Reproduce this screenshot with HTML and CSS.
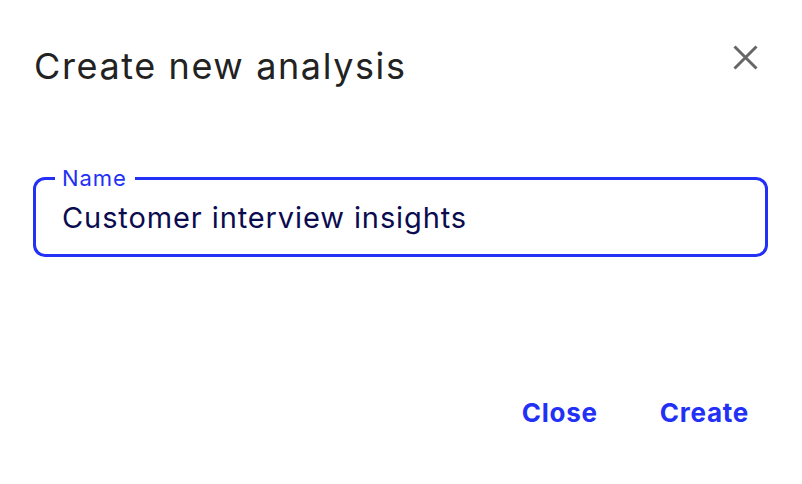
FILE: index.html
```html
<!DOCTYPE html>
<html>
<head>
<meta charset="utf-8">
<link rel="stylesheet" href="styles.css">
</head>
<body>
<div class="dialog">
  <div class="header">
    <h1 class="title">Create new analysis</h1>
    <button class="close-x" aria-label="Close">
      <svg width="25" height="25" viewBox="0 0 25 25"><path d="M1.5 1.5 L23.5 23.5 M23.5 1.5 L1.5 23.5" stroke="#666" stroke-width="3" fill="none"/></svg>
    </button>
  </div>
  <div class="field">
    <span class="label">Name</span>
    <div class="value">Customer interview insights</div>
  </div>
  <div class="actions">
    <button class="btn">Close</button>
    <button class="btn">Create</button>
  </div>
</div>
</body>
</html>
```
FILE: styles.css
```css
html, body { margin: 0; padding: 0; background: #fff; }
body { font-family: Inter, "Noto Sans", sans-serif; width: 802px; height: 484px; overflow: hidden; }
.dialog { padding: 44px 34px 0 33px; display: flex; flex-direction: column; }
.header { display: flex; justify-content: space-between; align-items: flex-start; height: 44px; padding-left: 1px; }
.title { margin: 0; font-size: 36px; font-weight: 400; color: #222; line-height: 44px; letter-spacing: 1.6px; }
.close-x { background: none; border: 0; padding: 0; margin: 1px 10px 0 0; width: 25px; height: 25px; display: block; cursor: pointer; }
.close-x svg { display: block; }
.field { position: relative; margin-top: 89px; height: 80px; box-sizing: border-box; border: 3px solid #2330f5; border-radius: 12px; padding: 20px 0 0 26px; }
.label { position: absolute; left: 19px; top: -13px; padding: 0 8px 0 7px; background: #fff; font-size: 22px; line-height: 22px; color: #2330f5; letter-spacing: 0.9px; }
.value { font-size: 29px; color: #0b0b50; line-height: 36px; letter-spacing: 0.9px; }
.actions { display: flex; justify-content: flex-end; gap: 62px; margin-top: 140px; padding-right: 19px; }
.btn { background: none; border: 0; padding: 0; font-family: inherit; font-size: 26px; line-height: 32px; font-weight: 700; color: #2330f5; letter-spacing: 0.75px; cursor: pointer; }
```
